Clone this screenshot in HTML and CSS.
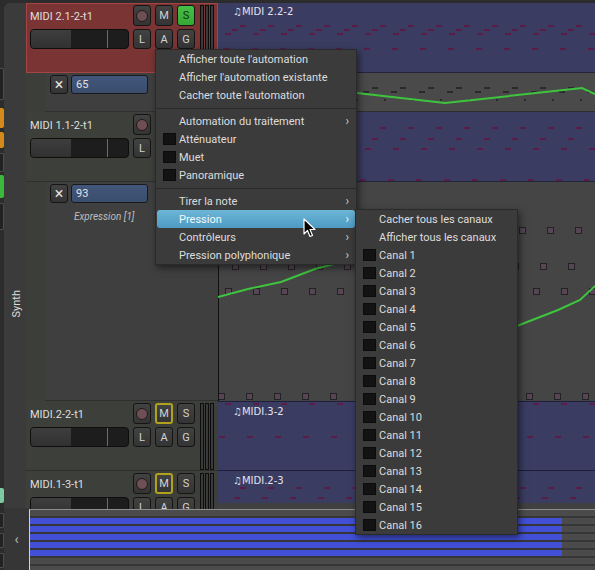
FILE: index.html
```html
<!DOCTYPE html>
<html>
<head>
<meta charset="utf-8">
<link rel="stylesheet" href="styles.css">
</head>
<body>
<div class="app">
  <div class="main">
    <div class="strip">
      <i class="s-dk s1"></i>
      <i class="s-or s2"></i>
      <i class="s-or s3"></i>
      <i class="s-dk s4"></i>
      <i class="s-gr s5"></i>
      <i class="s-dk s6"></i>
      <i class="s-tl s7"></i>
    </div>
    <div class="groups">
      <div class="grp-synth"><span class="synth">Synth</span></div>
    </div>
    <div class="tracks">
      <!-- Track 1 (selected) -->
      <div class="row track sel">
        <div class="hdr">
          <div class="hbody">
            <div class="hrow r-top">
              <span class="tname">MIDI 2.1-2-t1</span>
              <span class="btn rec"></span>
              <span class="btn">M</span>
              <span class="btn solo-on">S</span>
            </div>
            <div class="hrow r-bot">
              <div class="fader"><div class="fill"></div><div class="mark"></div></div>
              <span class="btn">L</span>
              <span class="btn">A</span>
              <span class="btn">G</span>
            </div>
          </div>
          <div class="meter"><i></i><i></i><i></i></div>
        </div>
        <div class="lane">
          <svg class="cv" width="377" height="70" viewBox="0 0 377 70">
            <defs>
              <pattern id="p1" width="28" height="70" patternUnits="userSpaceOnUse">
                <rect x="7" y="30" width="6" height="2" fill="#5b1c47"/>
                <rect x="14" y="26" width="6" height="2" fill="#5b1c47"/>
                <rect x="22" y="22" width="6" height="2" fill="#5b1c47"/>
                <rect x="6" y="45" width="6" height="2" fill="#5b1c47"/>
              </pattern>
            </defs>
            <rect width="377" height="69" fill="#3a3c62"/>
            <rect width="377" height="69" fill="url(#p1)"/>
            <rect y="69" width="377" height="1" fill="#24243a"/>
            <text class="rlabel" x="15" y="12">♫MIDI 2.2-2</text>
          </svg>
        </div>
      </div>
      <!-- Automation 1 -->
      <div class="row auto a1">
        <div class="ahdr">
          <div class="indent"></div>
          <div class="abody">
            <div class="arow">
              <span class="btn xbtn">×</span>
              <span class="vbox">65</span>
            </div>
          </div>
        </div>
        <div class="lane">
          <svg class="cv" width="377" height="39" viewBox="0 0 377 39">
            <defs>
              <pattern id="pa1" width="28" height="39" patternUnits="userSpaceOnUse">
                <rect x="5" y="18" width="6" height="2" fill="#2a2a2a"/>
                <rect x="14" y="14" width="6" height="2" fill="#2a2a2a"/>
                <rect x="26" y="26" width="6" height="2" fill="#2a2a2a"/>
              </pattern>
            </defs>
            <rect width="377" height="39" fill="#4a4a4a"/>
            <rect width="377" height="39" fill="url(#pa1)"/>
            <rect y="38" width="377" height="1" fill="#2e2e2e"/>
            <polyline points="120,18 139,20 227,30 364,15 377,21" fill="none" stroke="#3fc43f" stroke-width="2"/>
          </svg>
        </div>
      </div>
      <!-- Track 2 -->
      <div class="row track">
        <div class="hdr">
          <div class="hbody">
            <div class="hrow r-top">
              <span class="tname">MIDI 1.1-2-t1</span>
              <span class="btn rec"></span>
              <span class="btn">M</span>
              <span class="btn">S</span>
            </div>
            <div class="hrow r-bot">
              <div class="fader"><div class="fill"></div><div class="mark"></div></div>
              <span class="btn">L</span>
              <span class="btn">A</span>
              <span class="btn">G</span>
            </div>
          </div>
          <div class="meter"><i></i><i></i><i></i></div>
        </div>
        <div class="lane">
          <svg class="cv" width="377" height="70" viewBox="0 0 377 70">
            <defs>
              <pattern id="p2" width="28" height="70" patternUnits="userSpaceOnUse">
                <rect x="7" y="36" width="6" height="2" fill="#5b1c47"/>
                <rect x="14" y="26" width="6" height="2" fill="#5b1c47"/>
                <rect x="22" y="15" width="6" height="2" fill="#5b1c47"/>
                <rect x="2" y="67" width="6" height="2" fill="#5b1c47"/>
              </pattern>
            </defs>
            <rect width="377" height="70" fill="#3a3c62"/>
            <rect width="377" height="70" fill="url(#p2)"/>
            <rect y="69" width="377" height="1" fill="#24243a"/>
          </svg>
        </div>
      </div>
      <!-- Automation 2 -->
      <div class="row auto a2">
        <div class="ahdr">
          <div class="indent"></div>
          <div class="abody">
            <div class="arow">
              <span class="btn xbtn">×</span>
              <span class="vbox">93</span>
            </div>
            <span class="alabel">Expression [1]</span>
          </div>
        </div>
        <div class="lane">
          <svg class="cv" width="377" height="219" viewBox="0 0 377 219">
            <defs>
              <pattern id="pa2" width="28" height="219" patternUnits="userSpaceOnUse">
                <rect x="21.5" y="45.5" width="6" height="6" fill="#574556" stroke="#222" stroke-width="1"/>
                <rect x="14.5" y="81.5" width="6" height="6" fill="#574556" stroke="#222" stroke-width="1"/>
                <rect x="7.5" y="106.5" width="6" height="6" fill="#574556" stroke="#222" stroke-width="1"/>
                <rect x="0.5" y="211.5" width="6" height="6" fill="#574556" stroke="#222" stroke-width="1"/>
              </pattern>
            </defs>
            <rect width="377" height="219" fill="#454545"/>
            <rect width="377" height="219" fill="url(#pa2)"/>
            <rect width="1" height="219" fill="#111"/>
            <polyline points="0,115 30,107 63,100 97,87 120,81 140,76 160,140 299,144 340,128 362,118 377,104" fill="none" stroke="#3fc43f" stroke-width="2"/>
          </svg>
        </div>
      </div>
      <!-- Track 3 -->
      <div class="row track">
        <div class="hdr">
          <div class="hbody">
            <div class="hrow r-top">
              <span class="tname">MIDI.2-2-t1</span>
              <span class="btn rec"></span>
              <span class="btn mute-on">M</span>
              <span class="btn">S</span>
            </div>
            <div class="hrow r-bot">
              <div class="fader"><div class="fill"></div><div class="mark"></div></div>
              <span class="btn">L</span>
              <span class="btn">A</span>
              <span class="btn">G</span>
            </div>
          </div>
          <div class="meter"><i></i><i></i><i></i></div>
        </div>
        <div class="lane">
          <svg class="cv" width="377" height="70" viewBox="0 0 377 70">
            <defs>
              <pattern id="p3" width="28" height="70" patternUnits="userSpaceOnUse">
                <rect x="7" y="2" width="6" height="2" fill="#5b1c47"/>
                <rect x="1" y="35" width="6" height="2" fill="#5b1c47"/>
              </pattern>
            </defs>
            <rect width="377" height="70" fill="#3a3c62"/>
            <rect width="377" height="70" fill="url(#p3)"/>
            <rect width="377" height="1" fill="#1c1e3c"/>
            <rect y="69" width="377" height="1" fill="#1c1e3c"/>
            <text class="rlabel" x="15" y="14">♫MIDI.3-2</text>
          </svg>
        </div>
      </div>
      <!-- Track 4 -->
      <div class="row track last">
        <div class="hdr">
          <div class="hbody">
            <div class="hrow r-top">
              <span class="tname">MIDI.1-3-t1</span>
              <span class="btn rec"></span>
              <span class="btn mute-on">M</span>
              <span class="btn">S</span>
            </div>
            <div class="hrow r-bot">
              <div class="fader"><div class="fill"></div><div class="mark"></div></div>
              <span class="btn">L</span>
              <span class="btn">A</span>
              <span class="btn">G</span>
            </div>
          </div>
          <div class="meter"><i></i><i></i><i></i></div>
        </div>
        <div class="lane">
          <svg class="cv" width="377" height="37" viewBox="0 0 377 37">
            <defs>
              <pattern id="p4" width="28" height="37" patternUnits="userSpaceOnUse">
                <rect x="22" y="16" width="6" height="2" fill="#5b1c47"/>
                <rect x="16" y="26" width="6" height="2" fill="#5b1c47"/>
              </pattern>
            </defs>
            <rect width="377" height="37" fill="#404040"/>
            <rect width="377" height="32" fill="#3a3c62"/>
            <rect width="377" height="32" fill="url(#p4)"/>
            <text class="rlabel" x="15" y="13">♫MIDI.2-3</text>
          </svg>
        </div>
      </div>
    </div>
  </div>

  <div class="summary">
    <div class="sum-strip"><i></i><i></i><i></i></div>
    <div class="sum-left">‹</div>
    <div class="sum-main">
      <div class="srow"></div>
      <div class="srow"><div class="blue"></div></div>
      <div class="srow"><div class="blue"></div></div>
      <div class="srow"><div class="blue"></div></div>
      <div class="srow"><div class="blue"></div></div>
      <div class="srow"><div class="blue"></div></div>
      <div class="srow"></div>
      <div class="srow"></div>
    </div>
  </div>

  <div class="menu">
    <div class="mi"><span class="lbl">Afficher toute l'automation</span></div>
    <div class="mi"><span class="lbl">Afficher l'automation existante</span></div>
    <div class="mi"><span class="lbl">Cacher toute l'automation</span></div>
    <div class="sep"></div>
    <div class="mi"><span class="lbl">Automation du traitement</span><span class="arr">›</span></div>
    <div class="mi cb"><span class="box"></span><span class="lbl">Atténuateur</span></div>
    <div class="mi cb"><span class="box"></span><span class="lbl">Muet</span></div>
    <div class="mi cb"><span class="box"></span><span class="lbl">Panoramique</span></div>
    <div class="sep"></div>
    <div class="mi"><span class="lbl">Tirer la note</span><span class="arr">›</span></div>
    <div class="mi hl"><span class="lbl">Pression</span><span class="arr">›</span></div>
    <div class="mi"><span class="lbl">Contrôleurs</span><span class="arr">›</span></div>
    <div class="mi"><span class="lbl">Pression polyphonique</span><span class="arr">›</span></div>
  </div>

  <div class="menu submenu">
    <div class="mi"><span class="lbl">Cacher tous les canaux</span></div>
    <div class="mi"><span class="lbl">Afficher tous les canaux</span></div>
    <div class="mi cb"><span class="box"></span><span class="lbl">Canal 1</span></div>
    <div class="mi cb"><span class="box"></span><span class="lbl">Canal 2</span></div>
    <div class="mi cb"><span class="box"></span><span class="lbl">Canal 3</span></div>
    <div class="mi cb"><span class="box"></span><span class="lbl">Canal 4</span></div>
    <div class="mi cb"><span class="box"></span><span class="lbl">Canal 5</span></div>
    <div class="mi cb"><span class="box"></span><span class="lbl">Canal 6</span></div>
    <div class="mi cb"><span class="box"></span><span class="lbl">Canal 7</span></div>
    <div class="mi cb"><span class="box"></span><span class="lbl">Canal 8</span></div>
    <div class="mi cb"><span class="box"></span><span class="lbl">Canal 9</span></div>
    <div class="mi cb"><span class="box"></span><span class="lbl">Canal 10</span></div>
    <div class="mi cb"><span class="box"></span><span class="lbl">Canal 11</span></div>
    <div class="mi cb"><span class="box"></span><span class="lbl">Canal 12</span></div>
    <div class="mi cb"><span class="box"></span><span class="lbl">Canal 13</span></div>
    <div class="mi cb"><span class="box"></span><span class="lbl">Canal 14</span></div>
    <div class="mi cb"><span class="box"></span><span class="lbl">Canal 15</span></div>
    <div class="mi cb"><span class="box"></span><span class="lbl">Canal 16</span></div>
  </div>

  <svg class="cursor" width="13" height="20" viewBox="0 0 13 20">
    <path d="M1,1 L1,16 L4.5,12.5 L7,18.5 L9.5,17.5 L7,11.5 L12,11.5 Z" fill="#000" stroke="#fff" stroke-width="1.2" stroke-linejoin="round"/>
  </svg>
</div>
</body>
</html>
```
FILE: styles.css
```css
html, body {
  margin: 0;
  padding: 0;
}
body {
  background: #2c2c2c;
  font-family: Roboto, "Noto Sans", "DejaVu Sans", sans-serif;
}
.app {
  position: relative;
  width: 595px;
  height: 570px;
  overflow: hidden;
  display: flex;
  flex-direction: column;
  background: #2c2c2c;
}
.main {
  height: 508px;
  display: flex;
  flex: none;
}

/* left-most cut off strip */
.strip {
  width: 4px;
  flex: none;
  display: flex;
  flex-direction: column;
}
.strip i {
  display: block;
  flex: none;
  border-radius: 0 2px 2px 0;
}
.s-dk { background: #222; box-shadow: inset -1px 0 0 #4c4c4c, inset 0 1px 0 #4c4c4c, inset 0 -1px 0 #4c4c4c; }
.s-or { background: #d48a1a; }
.s-gr { background: #3cb83c; }
.s-tl { background: #7cc9a2; }
.s1 { margin-top: 68px; height: 32px; }
.s2 { margin-top: 8px; height: 20px; }
.s3 { margin-top: 4px; height: 16px; }
.s4 { margin-top: 5px; height: 19px; }
.s5 { margin-top: 3px; height: 23px; }
.s6 { margin-top: 5px; height: 27px; }
.s7 { margin-top: 258px; height: 15px; }

/* group tabs column */
.groups {
  width: 22px;
  flex: none;
  margin-top: 3px;
  background: #3b3b3b;
  border-top-left-radius: 6px;
  display: flex;
  flex-direction: column;
  padding-top: 97px;
  box-sizing: border-box;
}
.grp-synth {
  flex: 1;
  display: flex;
  align-items: center;
  justify-content: center;
  padding-left: 3px;
}
.synth {
  writing-mode: vertical-rl;
  transform: rotate(180deg);
  color: #dcdcdc;
  font-size: 11px;
}

/* tracks */
.tracks {
  flex: 1;
  margin-top: 3px;
  display: flex;
  flex-direction: column;
  min-width: 0;
}
.row {
  display: flex;
  flex: none;
}
.track { height: 70px; }
.a1 { height: 39px; }
.a2 { height: 219px; }
.track.last { flex: 1; height: auto; }

.hdr {
  width: 192px;
  flex: none;
  display: flex;
  box-sizing: border-box;
  padding: 2px 0 0 4px;
  background: #3d3f3b;
  box-shadow: inset 0 -1px 0 #2f302d;
}
.sel .hdr {
  background: #7a3434;
  box-shadow: inset 0 0 0 1px #a44545;
}
.hbody {
  width: 165px;
  display: flex;
  flex-direction: column;
  gap: 3px;
  align-self: flex-start;
}
.hrow {
  display: flex;
  align-items: center;
  gap: 4px;
}
.r-top { height: 21px; }
.r-bot { height: 20px; }
.tname {
  width: 99px;
  color: #dedede;
  font-size: 11px;
  padding-top: 1px;
  white-space: nowrap;
}
.btn {
  box-sizing: border-box;
  width: 18px;
  height: 100%;
  flex: none;
  border: 1px solid #151515;
  border-radius: 3px;
  background: linear-gradient(#424242, #343434);
  color: #d2d2d2;
  font-size: 11px;
  display: flex;
  align-items: center;
  justify-content: center;
}
.btn.rec::before {
  content: "";
  width: 10px;
  height: 10px;
  border-radius: 50%;
  background: #6e5054;
  border: 1px solid #221818;
}
.btn.solo-on {
  background: linear-gradient(#47c047, #34a834);
  color: #143014;
}
.btn.mute-on {
  border: 2px solid #b2a11c;
}
.fader {
  box-sizing: border-box;
  width: 99px;
  height: 20px;
  flex: none;
  border: 1px solid #0e0e0e;
  border-radius: 4px;
  background: #1d1d1d;
  display: flex;
  overflow: hidden;
}
.fader .fill {
  width: 40px;
  background: linear-gradient(#3e3e3e, #313131);
}
.fader .mark {
  width: 1px;
  margin-left: 36px;
  background: #6c6c6c;
}
.meter {
  margin-left: 5px;
  display: flex;
  gap: 1px;
  margin-bottom: 1px;
}
.meter i {
  display: block;
  width: 2px;
  border: 1px solid #0d0d0d;
  background: #3a3a3a;
}

/* automation headers */
.ahdr {
  width: 192px;
  flex: none;
  display: flex;
  background: #3f3f3f;
  box-shadow: inset 0 -1px 0 #2f2f2f;
}
.ahdr .indent {
  width: 19px;
  background: #3c3e3a;
}
.abody {
  padding: 2px 0 0 5px;
  display: flex;
  flex-direction: column;
}
.arow {
  display: flex;
  gap: 3px;
  height: 19px;
}
.xbtn {
  font-size: 16px;
  line-height: 1;
  color: #e0e0e0;
}
.vbox {
  box-sizing: border-box;
  width: 77px;
  height: 19px;
  background: linear-gradient(#42577b, #3a4d6e);
  border: 1px solid #1a1a1a;
  border-radius: 3px;
  color: #e2e2e2;
  font-size: 11px;
  line-height: 17px;
  padding-left: 4px;
}
.alabel {
  margin: 7px 0 0 24px;
  font-size: 10px;
  font-style: italic;
  color: #bdbdbd;
  line-height: 14px;
}

/* canvas lanes */
.lane {
  flex: 1;
  min-width: 0;
  overflow: hidden;
  background: #404040;
}
.cv {
  display: block;
}
.rlabel {
  font-family: "DejaVu Sans", Roboto, sans-serif;
  font-size: 10px;
  fill: #e4e4ee;
}

/* summary */
.summary {
  height: 62px;
  flex: none;
  display: flex;
}
.sum-strip {
  width: 4px;
  flex: none;
  display: flex;
  flex-direction: column;
}
.sum-strip i {
  display: block;
  height: 15px;
  margin-top: 5px;
  background: #222;
  border-radius: 0 2px 2px 0;
  box-shadow: inset -1px 0 0 #4c4c4c, inset 0 1px 0 #4c4c4c, inset 0 -1px 0 #4c4c4c;
}
.sum-left {
  width: 25px;
  flex: none;
  background: #363636;
  color: #b8b8b8;
  font-size: 14px;
  display: flex;
  align-items: center;
  justify-content: center;
}
.sum-main {
  flex: 1;
  margin-top: 1px;
  border-top: 1px solid #8e8e8e;
  border-left: 1px solid #d9d4bc;
  background: #363636;
  display: flex;
  flex-direction: column;
  gap: 2px;
}
.srow {
  height: 6px;
  flex: none;
  background: #4b4b4b;
}
.srow .blue {
  width: 532px;
  height: 6px;
  background: #4150d6;
}

/* menus */
.menu {
  position: absolute;
  left: 155px;
  top: 49px;
  width: 202px;
  box-sizing: border-box;
  background: #3b3b3b;
  border: 1px solid #2a2a2a;
  padding: 0 1px;
  box-shadow: 2px 3px 7px rgba(0, 0, 0, 0.5);
  font-size: 11px;
  color: #dddddd;
}
.submenu {
  left: 355px;
  top: 209px;
  width: 163px;
}
.mi {
  height: 18px;
  display: flex;
  align-items: center;
  padding: 0 6px 0 22px;
  white-space: nowrap;
}
.mi.cb {
  padding-left: 6px;
}
.mi .box {
  width: 13px;
  height: 12px;
  margin-right: 3px;
  background: #131313;
  border-radius: 1px;
  box-shadow: inset 0 0 0 1px #0b0b0b;
  flex: none;
}
.mi .lbl {
  flex: 1;
}
.mi .arr {
  color: #cfcfcf;
  font-size: 12px;
}
.mi.hl {
  background: linear-gradient(#6cb5d7, #4e9ac2);
  border-radius: 3px;
  color: #f4f8fb;
}
.mi.hl .arr {
  color: #f4f8fb;
}
.sep {
  height: 8px;
  margin: 0 -1px;
  display: flex;
  align-items: center;
}
.sep::before {
  content: "";
  flex: 1;
  height: 1px;
  background: #292929;
}

.cursor {
  position: absolute;
  left: 303px;
  top: 218px;
}
```
